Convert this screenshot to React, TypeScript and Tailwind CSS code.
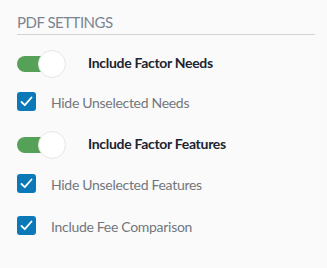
const font = { fontFamily: '"Lato", "Liberation Sans", sans-serif' };

function Toggle({ label }: { label: string }) {
  return (
    <div className="flex h-[30px] items-center">
      <div className="relative h-[30px] w-[50px] shrink-0">
        <div className="absolute left-0 top-[7px] h-[16px] w-[40px] rounded-full bg-[#55a157]" />
        <div className="absolute left-[21px] top-[1px] h-[28px] w-[28px] rounded-full border border-[#e6e6e6] bg-white" />
      </div>
      <span className="mb-[3px] ml-[21px] text-[14px] leading-none font-bold tracking-[-0.3px] text-[#1c2431]">{label}</span>
    </div>
  );
}

function Check({ label }: { label: string }) {
  return (
    <div className="flex h-[20px] items-center">
      <div className="flex h-[19px] w-[19px] shrink-0 items-center justify-center rounded-[3px] bg-[#0b79b8]">
        <svg width="13" height="11" viewBox="0 0 13 11" fill="none">
          <path d="M1.5 6 L4.8 9.2 L11.5 1.5" stroke="white" strokeWidth="1.8" strokeLinecap="round" strokeLinejoin="round" />
        </svg>
      </div>
      <span className="ml-[15px] mt-[3px] text-[14px] leading-none tracking-[-0.3px] text-[#73777d]">{label}</span>
    </div>
  );
}

export default function App() {
  return (
    <div className="h-[268px] w-[327px] bg-[#fafafa] pl-[17px] pr-[12px] pt-[12px]" style={font}>
      <div className="border-b border-[#d3d3d3] pb-[2px] text-[15px] leading-[20px] tracking-[-0.5px] text-[#7b8592]">PDF SETTINGS</div>
      <div className="mt-[14px]">
        <Toggle label="Include Factor Needs" />
      </div>
      <div className="mt-[12px]">
        <Check label="Hide Unselected Needs" />
      </div>
      <div className="mt-[19px]">
        <Toggle label="Include Factor Features" />
      </div>
      <div className="mt-[13px]">
        <Check label="Hide Unselected Features" />
      </div>
      <div className="mt-[22px]">
        <Check label="Include Fee Comparison" />
      </div>
    </div>
  );
}
